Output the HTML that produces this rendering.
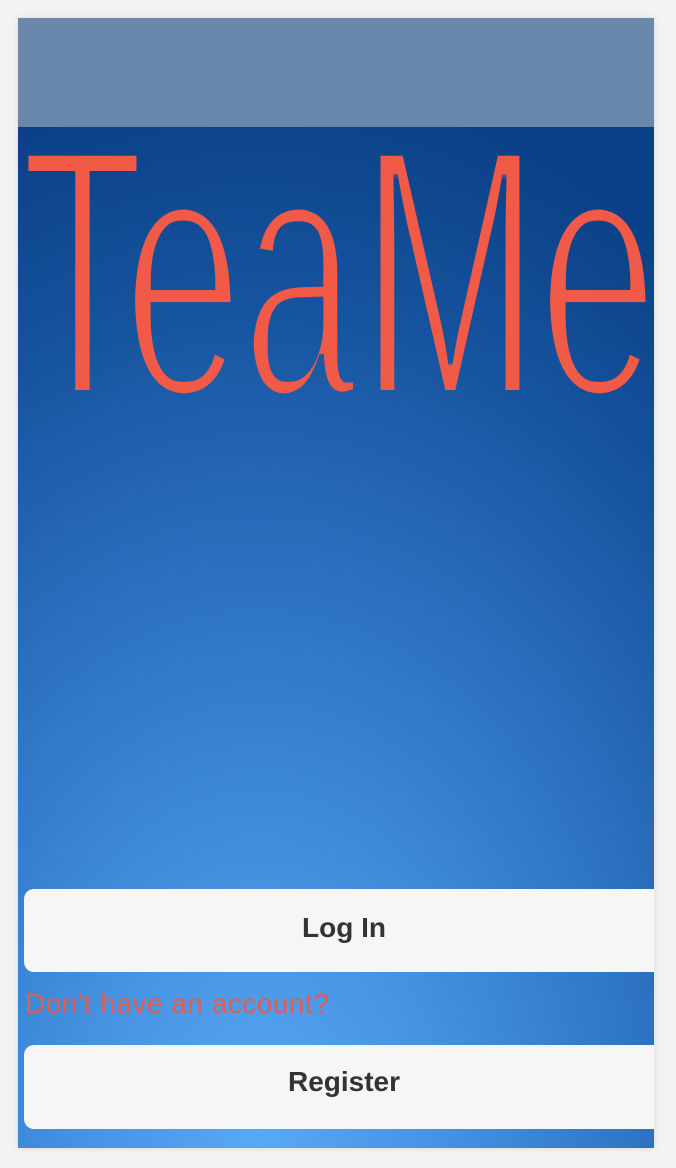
<!DOCTYPE html>
<html><head><meta charset="utf-8"><style>
html,body{margin:0;padding:0;width:676px;height:1168px;background:#f3f3f3;overflow:hidden;font-family:"Liberation Sans",sans-serif}
#frame{position:absolute;left:18px;top:18px;width:636px;height:1130px;overflow:hidden;box-shadow:0 0 6px rgba(0,0,0,.12)}
#bar{position:absolute;left:0;top:0;width:636px;height:109px;background:#6a88ab}
#main{position:absolute;left:0;top:109px;width:636px;height:1021px;background:radial-gradient(ellipse 120% 105% at 38% 100%,#58a9f6 0%,#4491e0 25%,#2a6fbe 55%,#17549f 78%,#0a4087 100%)}
svg{position:absolute;left:0;top:0}
.btn{position:absolute;left:6px;width:640px;background:#f6f6f6;border-radius:10px;text-align:center;font-weight:bold;color:#333;font-size:28px}
#q{position:absolute;left:7px;top:970px;color:#e85a4a;font-size:28px;letter-spacing:0.5px}
</style></head><body>
<div id="frame">
<div id="bar"></div>
<div id="main"></div>
<svg width="636" height="1130" viewBox="18 18 636 1130">
<defs><filter id="thin" x="-10%" y="-10%" width="120%" height="120%"><feMorphology operator="erode" radius="2 6"/></filter></defs>
<g filter="url(#thin)" font-family="Liberation Sans, sans-serif" font-size="358" fill="#f05a47" style="white-space:pre">
<text x="22" y="396" textLength="121" lengthAdjust="spacingAndGlyphs">T</text>
<text x="124" y="396" textLength="118" lengthAdjust="spacingAndGlyphs">e</text>
<text x="243" y="396" textLength="112" lengthAdjust="spacingAndGlyphs">a</text>
<text x="361" y="396" textLength="178" lengthAdjust="spacingAndGlyphs">M</text>
<text x="539" y="396" textLength="118" lengthAdjust="spacingAndGlyphs">e</text>
</g>
</svg>
<div class="btn" style="top:871px;height:83px;line-height:78px">Log In</div>
<div id="q">Don't have an account?</div>
<div class="btn" style="top:1027px;height:84px;line-height:74px">Register</div>
</div>
</body></html>
